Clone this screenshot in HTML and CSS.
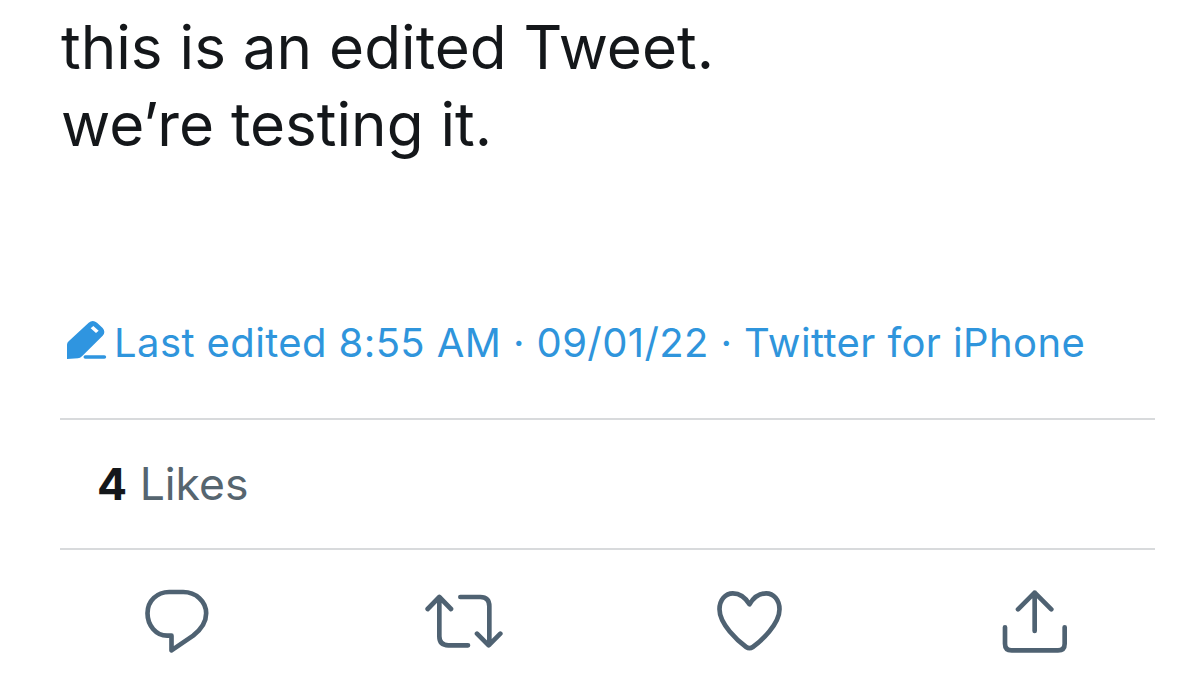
FILE: index.html
```html
<!DOCTYPE html>
<html lang="en">
<head>
<meta charset="utf-8">
<title>Tweet</title>
<link rel="stylesheet" href="styles.css">
</head>
<body>
<main class="tweet">
  <p class="text">this is an edited Tweet.<br>we’re testing it.</p>
  <div class="meta">
    <svg class="pencil" viewBox="48 30 123 120" aria-hidden="true">
      <path fill="#2f95e0" fill-rule="evenodd" d="M51 147 V104 Q51 98 56 94 L116 38 Q128 28 141 38 L158 54 Q168 66 158 77 L96 139 Q90 145 84 145 Z M122 55 L130 48 L146 62 L138 69 Z"/>
      <path fill="none" stroke="#2f95e0" stroke-width="11" stroke-linecap="round" d="M106 141 H163"/>
    </svg>
    <span>Last edited 8:55 AM · 09/01/22 · Twitter for iPhone</span>
  </div>
  <div class="likes"><b>4</b> Likes</div>
  <div class="actions">
    <svg class="icon reply" viewBox="40 24 200 198" aria-hidden="true">
      <path d="M125 211 V167 H112 C78 167 53 136 53 100 C53 62 82 36 118 36 H160 C198 36 229 64 229 100 C229 130 212 150 190 167 Z"/>
    </svg>
    <svg class="icon retweet" viewBox="884 40 234 168" aria-hidden="true">
      <path d="M892 88 L927 52 L962 88 M927 52 V170 Q927 197 954 197 H1013 M990 52 H1050 Q1077 52 1077 80 V195 M1040 162 L1075 197 L1110 162"/>
    </svg>
    <svg class="icon heart" viewBox="50 32 200 186" aria-hidden="true">
      <path d="M150 75 C135 50 115 42 100 42 C78 42 60 62 60 90 C60 135 115 185 140 203 Q150 210 160 203 C185 185 240 135 240 90 C240 62 222 42 200 42 C185 42 165 50 150 75 Z"/>
    </svg>
    <svg class="icon share" viewBox="912 26 198 192" aria-hidden="true">
      <path d="M1010 152 V37 M960 87 L1010 37 L1060 87 M921 141 V190 Q921 210 941 210 H1080 Q1100 210 1100 190 V141"/>
    </svg>
  </div>
</main>
</body>
</html>
```
FILE: styles.css
```css
html, body {
  margin: 0;
  height: 677px;
  overflow: hidden;
  background: #fff;
}
.tweet {
  width: 1095px;
  margin-left: 60px;
  font-family: Inter, "Liberation Sans", sans-serif;
}
.text {
  margin: 0;
  padding: 9px 0 0 1px;
  height: 299px;
  font-size: 60.2px;
  line-height: 77px;
  color: #14171a;
}
.meta {
  display: flex;
  align-items: flex-start;
  gap: 7px;
  height: 99px;
  padding: 11px 0 0 6px;
  font-size: 40px;
  line-height: 48px;
  letter-spacing: 0.4px;
  color: #2f95dc;
  border-bottom: 2px solid #d8dadc;
}
.pencil {
  width: 41px;
  height: 40px;
  flex: none;
  margin-top: 1px;
}
.likes {
  height: 128px;
  line-height: 128px;
  padding-left: 37px;
  font-size: 44.5px;
  color: #56656f;
  border-bottom: 2px solid #d8dadc;
}
.likes b {
  color: #14171a;
}
.actions {
  display: flex;
  align-items: flex-start;
  padding: 38px 0 0 83px;
}
.icon {
  fill: none;
  stroke: #4f6272;
  stroke-width: 14;
  stroke-linecap: round;
  stroke-linejoin: round;
  flex: none;
}
.reply { width: 67px; height: 66px; }
.retweet { width: 78px; height: 56px; margin: 5px 0 0 215px; }
.heart { width: 67px; height: 62px; margin: 2px 0 0 213px; }
.share { width: 66px; height: 64px; margin: 1px 0 0 219px; }
```
